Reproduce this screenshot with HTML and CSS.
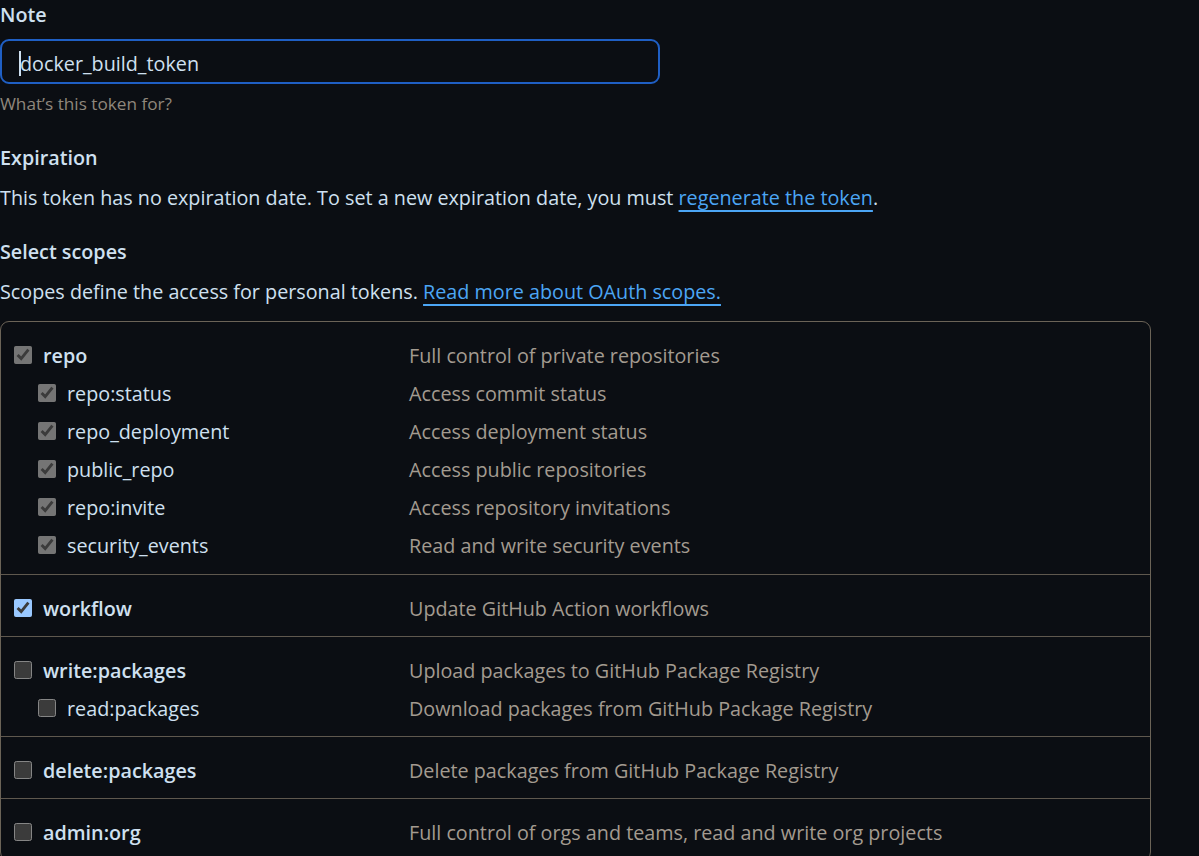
FILE: index.html
```html
<!DOCTYPE html>
<html lang="en">
<head>
<meta charset="utf-8">
<title>Personal access token</title>
<link rel="stylesheet" href="styles.css">
</head>
<body>
<main class="page">
  <label class="label" for="note">Note</label>
  <div class="form-control" id="note"><span class="caret"></span>docker_build_token</div>
  <p class="hint">What’s this token for?</p>

  <h3 class="label section">Expiration</h3>
  <p class="text">This token has no expiration date. To set a new expiration date, you must <a href="#">regenerate the token</a>.</p>

  <h3 class="label section">Select scopes</h3>
  <p class="text">Scopes define the access for personal tokens. <a href="#">Read more about OAuth scopes.</a></p>

  <div class="scopes">
    <div class="group">
      <div class="row"><label class="name top"><input type="checkbox" checked disabled><span>repo</span></label><span class="desc">Full control of private repositories</span></div>
      <div class="row"><label class="name child"><input type="checkbox" checked disabled><span>repo:status</span></label><span class="desc">Access commit status</span></div>
      <div class="row"><label class="name child"><input type="checkbox" checked disabled><span>repo_deployment</span></label><span class="desc">Access deployment status</span></div>
      <div class="row"><label class="name child"><input type="checkbox" checked disabled><span>public_repo</span></label><span class="desc">Access public repositories</span></div>
      <div class="row"><label class="name child"><input type="checkbox" checked disabled><span>repo:invite</span></label><span class="desc">Access repository invitations</span></div>
      <div class="row"><label class="name child"><input type="checkbox" checked disabled><span>security_events</span></label><span class="desc">Read and write security events</span></div>
    </div>
    <div class="group">
      <div class="row"><label class="name top"><input type="checkbox" checked><span>workflow</span></label><span class="desc">Update GitHub Action workflows</span></div>
    </div>
    <div class="group">
      <div class="row"><label class="name top"><input type="checkbox"><span>write:packages</span></label><span class="desc">Upload packages to GitHub Package Registry</span></div>
      <div class="row"><label class="name child"><input type="checkbox"><span>read:packages</span></label><span class="desc">Download packages from GitHub Package Registry</span></div>
    </div>
    <div class="group">
      <div class="row"><label class="name top"><input type="checkbox"><span>delete:packages</span></label><span class="desc">Delete packages from GitHub Package Registry</span></div>
    </div>
    <div class="group">
      <div class="row"><label class="name top"><input type="checkbox"><span>admin:org</span></label><span class="desc">Full control of orgs and teams, read and write org projects</span></div>
    </div>
  </div>
</main>
</body>
</html>
```

FILE: styles.css
```css
:root {
  color-scheme: dark;
}
html, body {
  margin: 0;
  padding: 0;
  background: #0b0e13;
}
body {
  font-family: "Open Sans", "Noto Sans", sans-serif;
  font-size: 19.75px;
  color: #cfe0f0;
  overflow: hidden;
}
.page {
  display: flex;
  flex-direction: column;
  align-items: flex-start;
}
.label {
  display: block;
  margin: 0;
  font-size: 19.75px;
  font-weight: 600;
  line-height: 30px;
  color: #cfe0f0;
}
.form-control {
  box-sizing: border-box;
  margin-top: 9px;
  width: 660px;
  height: 45px;
  border: 2px solid #1f5fc4;
  border-radius: 9px;
  padding: 3px 0 0 17px;
  display: flex;
  align-items: center;
  font-size: 19.75px;
  color: #cfe0f0;
}
.caret {
  display: inline-block;
  width: 2px;
  height: 25px;
  background: #cfe0f0;
  margin-right: -1px;
}
.hint {
  margin: 5px 0 0;
  font-size: 17.2px;
  line-height: 30px;
  color: #8f877c;
}
.section {
  margin-top: 24px;
}
.text {
  margin: 10px 0 0;
  line-height: 30px;
  color: #cfe0f0;
}
.text a {
  color: #4ca6f5;
  text-decoration: underline;
  text-underline-offset: 5px;
  text-decoration-thickness: 2px;
}
.scopes {
  margin-top: 14px;
  width: 1151px;
  box-sizing: border-box;
  border: 1px solid #6b6357;
  border-radius: 9px;
}
.group {
  padding: 14px 0 9px;
  border-top: 1px solid #5f584e;
}
.group:first-child {
  border-top: 0;
  padding-bottom: 10px;
}
.row {
  display: grid;
  grid-template-columns: 408px 1fr;
  height: 38px;
  align-items: center;
}
.name {
  display: flex;
  align-items: center;
  gap: 11px;
  padding-left: 13px;
  color: #cfe0f0;
}
.name.top {
  font-weight: 600;
}
.name.child {
  padding-left: 37px;
}
.name input {
  margin: 0;
  width: 18px;
  height: 18px;
  flex: none;
}
.desc {
  color: #a39b90;
}
```
